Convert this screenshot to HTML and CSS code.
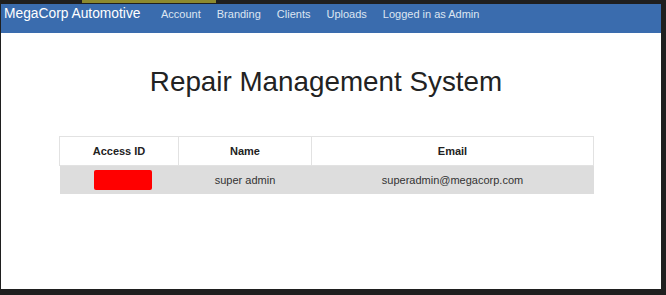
FILE: index.html
```html
<!DOCTYPE html>
<html lang="en">
<head>
    <meta charset="UTF-8">
    <meta name="viewport" content="width=device-width, initial-scale=1.0">
    <title>Repair Management System</title>
    <link rel="stylesheet" href="styles.css">
</head>
<body>

    <div class="frame-top">
        <span class="frame-tab"></span>
    </div>

    <div class="window">
        <!-- Верхняя панель -->
        <div class="navbar">
            <a class="brand" href="#">MegaCorp Automotive</a>
            <a class="nav-link" href="#">Account</a>
            <a class="nav-link" href="#">Branding</a>
            <a class="nav-link" href="#">Clients</a>
            <a class="nav-link" href="#">Uploads</a>
            <span class="nav-link">Logged in as Admin</span>
        </div>

        <div class="container">
            <h1>Repair Management System</h1>

            <table class="users">
                <colgroup>
                    <col class="col-id">
                    <col class="col-name">
                    <col class="col-email">
                </colgroup>
                <thead>
                    <tr>
                        <th>Access ID</th>
                        <th>Name</th>
                        <th>Email</th>
                    </tr>
                </thead>
                <tbody>
                    <tr>
                        <td><span class="redacted"></span></td>
                        <td>super admin</td>
                        <td>superadmin@megacorp.com</td>
                    </tr>
                </tbody>
            </table>
        </div>
    </div>

</body>
</html>
```

FILE: styles.css
```css
 html, body {
     margin: 0;
     padding: 0;
     height: 295px;
     overflow: hidden;
 }
 body {
     font-family: "Liberation Sans", Arial, sans-serif;
     background-color: #1f1f1f;
     padding: 0 5px 6px 1px;
     box-sizing: border-box;
 }
.frame-top {
     height: 4px;
 }
.frame-tab {
     display: block;
     margin-left: 81px;
     width: 134px;
     height: 3px;
     background-color: #8c8a2f;
 }
.window {
     background: white;
     height: 285px;
 }
.navbar {
     display: flex;
     align-items: baseline;
     height: 29px;
     box-sizing: border-box;
     padding: 2px 0 0 3px;
     background-color: #3a6cae;
     line-height: 16px;
 }
.navbar a {
     text-decoration: none;
 }
.brand {
     color: white;
     font-size: 13.8px;
     margin-right: 20.5px;
 }
.nav-link {
     color: #dde6f2;
     font-size: 11px;
     margin-right: 16px;
 }
.container {
     width: 534px;
     margin-left: 58px;
 }
h1 {
     font-weight: normal;
     font-size: 27.8px;
     line-height: 30px;
     color: #222;
     text-align: center;
     margin: 34px 0 39px;
 }
.users {
     width: 534px;
     table-layout: fixed;
     border-collapse: collapse;
     font-size: 11px;
     color: #333;
 }
.col-id {
     width: 119px;
 }
.col-name {
     width: 133px;
 }
.col-email {
     width: 282px;
 }
.users th {
     height: 28px;
     padding: 0;
     border: 1px solid #e2e2e2;
     color: #222;
     text-align: center;
 }
.users td {
     height: 28px;
     padding: 0;
     text-align: center;
     vertical-align: middle;
     background-color: #dddddd;
 }
.redacted {
     display: inline-block;
     vertical-align: middle;
     width: 58px;
     height: 20px;
     margin-left: 7px;
     border-radius: 2px;
     background-color: #ff0000;
 }
```
